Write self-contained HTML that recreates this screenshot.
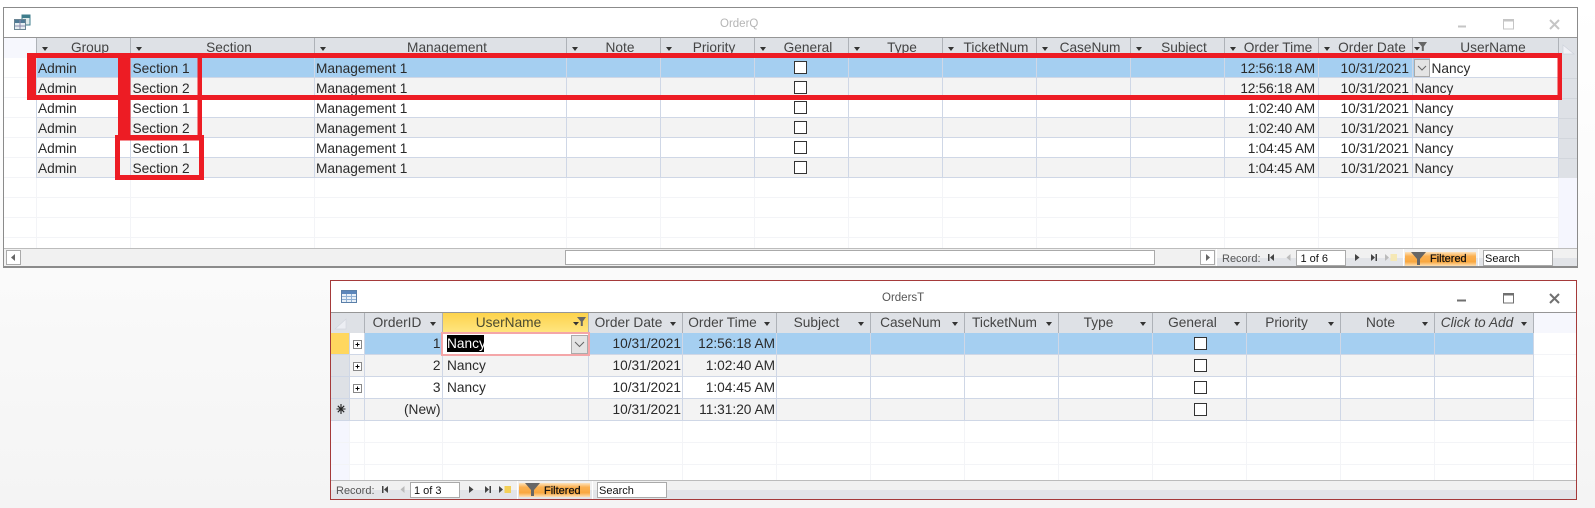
<!DOCTYPE html>
<html><head><meta charset="utf-8"><title>OrderQ / OrdersT</title>
<style>
html,body{margin:0;padding:0}
body{width:1595px;height:508px;position:relative;overflow:hidden;background:linear-gradient(180deg,#fff 0,#fafafa 270px,#f4f4f4 508px);font-family:"Liberation Sans",sans-serif;font-size:13.7px;color:#2a2a2a}
svg{position:absolute;left:0;top:0}
.t{position:absolute;white-space:nowrap}
.row{position:absolute;left:0;width:1595px}
.row .t{top:0;line-height:inherit}
.r{text-align:right}
.tm{letter-spacing:-.2px}
.h{position:absolute;height:20px;line-height:20px;text-align:center;color:#444;white-space:nowrap;box-sizing:border-box}
.h i{position:absolute;top:9px;width:0;height:0;border:3px solid transparent;border-top:4px solid #333;border-bottom:0}
.a .h{top:38px;padding-left:14px}
.a .h i{left:6px}
.b .h{top:313px;padding-right:13px}
.b .h i{right:6px}
.s{font-size:11px;line-height:14px;color:#111}
</style></head><body>
<svg width="1595" height="508" xmlns="http://www.w3.org/2000/svg" shape-rendering="crispEdges">
<!-- TOP WINDOW -->
<rect x="3.5" y="7.5" width="1574" height="260" fill="#fff" stroke="#8b8b8b" stroke-width="1.3"/>
<rect x="4" y="38" width="32" height="20" fill="#f6f7fd"/>
<rect x="36" y="38" width="1376" height="20" fill="#dee1e6"/>
<rect x="1412" y="38" width="147" height="20" fill="#dee1e6"/>
<rect x="1559" y="38" width="18" height="140" fill="#dee1e6"/>
<rect x="1559" y="178" width="18" height="70" fill="#f5f6fe"/>
<path d="M4 37.5H1577" stroke="#969696"/>
<rect x="36" y="58" width="1523" height="20" fill="#a5cff1"/>
<rect x="1430" y="58" width="129" height="20" fill="#fff"/>
<rect x="36" y="78" width="1523" height="20" fill="#f3f3f3"/>
<rect x="36" y="118" width="1523" height="20" fill="#f3f3f3"/>
<rect x="36" y="158" width="1523" height="20" fill="#f3f3f3"/>
<!-- faint grid -->
<path d="M4 77.5H36M4 97.5H36M4 117.5H36M4 137.5H36M4 157.5H36M4 177.5H36M4 197.5H1559M4 217.5H1559M4 237.5H1559M36.5 178V248M130.5 178V248M314.5 178V248M566.5 178V248M660.5 178V248M754.5 178V248M848.5 178V248M942.5 178V248M1036.5 178V248M1130.5 178V248M1224.5 178V248M1318.5 178V248M1412.5 178V248M1558.5 178V248" stroke="#f3f4f7" fill="none"/>
<path d="M36 77.5H1559M36 97.5H1559M36 117.5H1559M36 137.5H1559M36 157.5H1559M36 177.5H1559M36.5 58V178M130.5 58V178M314.5 58V178M566.5 58V178M660.5 58V178M754.5 58V178M848.5 58V178M942.5 58V178M1036.5 58V178M1130.5 58V178M1224.5 58V178M1318.5 58V178M1412.5 58V178M1558.5 58V178" stroke="#cfd7e6" fill="none"/>
<path d="M36.5 38V58M130.5 38V58M314.5 38V58M566.5 38V58M660.5 38V58M754.5 38V58M848.5 38V58M942.5 38V58M1036.5 38V58M1130.5 38V58M1224.5 38V58M1318.5 38V58M1412.5 38V58M1558.5 38V58" stroke="#aeb2b8" fill="none"/>
<path d="M1559 98.5H1577M1559 118.5H1577M1559 138.5H1577M1559 158.5H1577M1559 78.5H1577" stroke="#d2d6dc"/>
<path d="M1563 45L1574 54H1563Z" fill="#f0f1f6" shape-rendering="auto" stroke="#cfd3dc" stroke-width=".7"/>
<!-- top window checkboxes -->
<g fill="#fff" stroke="#333" stroke-width="1.2">
<rect x="794.5" y="61.5" width="12" height="12"/><rect x="794.5" y="81.5" width="12" height="12"/><rect x="794.5" y="101.5" width="12" height="12"/><rect x="794.5" y="121.5" width="12" height="12"/><rect x="794.5" y="141.5" width="12" height="12"/><rect x="794.5" y="161.5" width="12" height="12"/>
</g>
<!-- top dropdown -->
<rect x="1414.5" y="59.5" width="15" height="17" fill="#e4e4e4" stroke="#ababab"/>
<path d="M1418 66L1422 70L1426 66" fill="none" stroke="#666" shape-rendering="auto"/>
<!-- top header filter -->
<path d="M1418 42H1427L1423.800 46.500V51H1421.800V46.500Z" fill="#666" shape-rendering="auto"/><path d="M1414 47H1420L1417 50.500Z" fill="#333" shape-rendering="auto"/>
<!-- top title icon -->
<rect x="22" y="15" width="8" height="10" fill="#dfeaea" stroke="#3f7d8c"/><rect x="22" y="15" width="8" height="3" fill="#3f7d8c"/>
<rect x="14.5" y="19.5" width="11" height="10" fill="#e6eef2" stroke="#6b8594"/><rect x="15" y="20" width="10" height="3" fill="#4f7a95"/><path d="M20 20V29M15 26H25" stroke="#88a"/>
<!-- top window buttons -->
<path d="M1458 26.5H1466" stroke="#c5c5c5" stroke-width="2"/>
<rect x="1503.5" y="19.5" width="10" height="9.5" fill="none" stroke="#c5c5c5"/><path d="M1503 20.5H1514" stroke="#c5c5c5" stroke-width="2"/>
<path d="M1550 20L1559 29M1559 20L1550 29" stroke="#c5c5c5" stroke-width="2" shape-rendering="auto"/>
<!-- top scrollbar / nav -->
<rect x="4" y="249" width="1213" height="18" fill="#f1f1f1"/>
<rect x="1217" y="249" width="360" height="9" fill="#f1f1f1"/><rect x="1217" y="258" width="360" height="9" fill="#e2e4e8"/>
<path d="M4 248.5H1577" stroke="#bcbcbc"/>
<path d="M1216.5 249V267M1403.5 249V267M1478.5 249V267" stroke="#fff"/>
<path d="M4 266.5H1577" stroke="#8b8b8b"/>
<rect x="6.5" y="250.5" width="14" height="14" fill="#fff" stroke="#aaa"/><path d="M11 257.5L15 254V261Z" fill="#666" shape-rendering="auto"/>
<rect x="565.5" y="250.5" width="589" height="14" fill="#fff" stroke="#aaa"/>
<rect x="1200.5" y="250.5" width="14" height="14" fill="#fff" stroke="#aaa"/><path d="M1206 254V261L1210 257.5Z" fill="#666" shape-rendering="auto"/>
<g shape-rendering="auto">
<path d="M1268 254H1269.5V261H1268ZM1274 254V261L1270 257.5Z" fill="#444"/>
<path d="M1290.5 254V261L1286.5 257.5Z" fill="#bbb"/>
<path d="M1355 254V261L1359.5 257.5Z" fill="#444"/>
<path d="M1371 254V261L1375 257.5ZM1375.5 254H1377V261H1375.5Z" fill="#444"/>
<path d="M1385 254V261L1389 257.5Z" fill="#bbb"/>
<rect x="1390.5" y="254" width="6.5" height="7" fill="#f5e8b5"/>
</g>
<rect x="1296.5" y="250.5" width="49" height="15" fill="#fff" stroke="#aaa"/>
<defs><linearGradient id="o" x1="0" y1="0" x2="0" y2="1"><stop offset="0" stop-color="#fde3bd"/><stop offset=".3" stop-color="#fbb152"/><stop offset=".7" stop-color="#f9a840"/><stop offset="1" stop-color="#fde0b5"/></linearGradient>
<linearGradient id="y" x1="0" y1="0" x2="0" y2="1"><stop offset="0" stop-color="#fdd34c"/><stop offset="1" stop-color="#ffe682"/></linearGradient></defs>
<rect x="1405" y="252" width="71" height="14" fill="url(#o)"/>
<path d="M1411 252H1426L1420 259V265H1417V259Z" fill="#666" shape-rendering="auto"/>
<rect x="1483.5" y="250.5" width="69" height="15" fill="#fff" stroke="#aaa"/>

<!-- LOWER WINDOW -->
<rect x="330.5" y="280.5" width="1246" height="219" fill="#fff" stroke="#a53a3a" stroke-width="1.2"/>
<rect x="331" y="313" width="1202" height="20" fill="#dee1e6"/>
<rect x="1533" y="313" width="43" height="20" fill="#f6f7fd"/>
<rect x="442" y="313" width="146" height="20" fill="url(#y)"/>
<path d="M331 312.5H1576" stroke="#969696"/>
<rect x="331" y="333" width="18" height="21" fill="#ffd75f"/>
<rect x="331" y="355" width="18" height="65" fill="#dee1e6"/>
<rect x="331" y="421" width="18" height="59" fill="#f5f6fe"/>
<rect x="365" y="333" width="1168" height="21" fill="#a5cff1"/>
<rect x="349" y="355" width="1184" height="21" fill="#f3f3f3"/>
<rect x="349" y="399" width="1184" height="21" fill="#f3f3f3"/>
<path d="M331 442.5H1576M331 464.5H1576M1533 354.5H1576M1533 376.5H1576M1533 398.5H1576M1533 420.5H1576M349.5 421V480M364.5 421V480M442.5 421V480M588.5 421V480M682.5 421V480M776.5 421V480M870.5 421V480M964.5 421V480M1058.5 421V480M1152.5 421V480M1246.5 421V480M1340.5 421V480M1434.5 421V480M1533.5 421V480" stroke="#f3f4f7" fill="none"/>
<path d="M331 354.5H1533M331 376.5H1533M331 398.5H1533M331 420.5H1533M349.5 333V421M364.5 333V421M442.5 333V421M588.5 333V421M682.5 333V421M776.5 333V421M870.5 333V421M964.5 333V421M1058.5 333V421M1152.5 333V421M1246.5 333V421M1340.5 333V421M1434.5 333V421M1533.5 333V421" stroke="#cfd7e6" fill="none"/>
<path d="M364.5 313V333M442.5 313V333M588.5 313V333M682.5 313V333M776.5 313V333M870.5 313V333M964.5 313V333M1058.5 313V333M1152.5 313V333M1246.5 313V333M1340.5 313V333M1434.5 313V333M1533.5 313V333" stroke="#aeb2b8" fill="none"/>
<path d="M346 319L335 329H346Z" fill="#eceef3" stroke="#d3d6de" stroke-width=".7" shape-rendering="auto"/>
<!-- edit cell -->
<rect x="442" y="333" width="147" height="22" fill="#fff" stroke="#f4a6a8" stroke-width="2"/>
<rect x="447" y="335" width="37" height="17" fill="#000"/>
<rect x="571.5" y="335.5" width="16" height="18" fill="#e4e4e4" stroke="#ababab"/>
<path d="M575 342L579.5 346.5L584 342" fill="none" stroke="#666" shape-rendering="auto"/>
<!-- expand boxes -->
<g fill="#fff" stroke="#888"><rect x="353.5" y="340.5" width="8" height="8"/><rect x="353.5" y="362.5" width="8" height="8"/><rect x="353.5" y="384.5" width="8" height="8"/></g>
<path d="M355.5 344.5H359.5M357.5 342.5V346.5M355.5 366.5H359.5M357.5 364.5V368.5M355.5 388.5H359.5M357.5 386.5V390.5" stroke="#000"/>
<!-- star -->
<path d="M341 404V414M336.5 409H345.5M337.8 405.8L344.2 412.2M344.2 405.8L337.8 412.2" stroke="#222" stroke-width="1.1" shape-rendering="auto"/>
<!-- checkboxes -->
<g fill="#fff" stroke="#333" stroke-width="1.2"><rect x="1194.5" y="337.5" width="12" height="12"/><rect x="1194.5" y="359.5" width="12" height="12"/><rect x="1194.5" y="381.5" width="12" height="12"/><rect x="1194.5" y="403.5" width="12" height="12"/></g>
<!-- header filter -->
<path d="M577 317H586L582.8 321.5V326H580.8V321.5Z" fill="#666" shape-rendering="auto"/><path d="M573 322H579L576 325.5Z" fill="#333" shape-rendering="auto"/>
<!-- title icon -->
<rect x="341.5" y="290.5" width="15" height="12" fill="#e8f0f8" stroke="#5a7fa8"/><rect x="342" y="291" width="14" height="3" fill="#5b86bb"/>
<path d="M346.5 294V302M351.5 294V302M342 296.5H356M342 299.5H356" stroke="#8fb0d4"/>
<!-- buttons -->
<path d="M1457 300.5H1466" stroke="#707070" stroke-width="2"/>
<rect x="1503.5" y="293.5" width="10" height="9.5" fill="none" stroke="#707070"/><path d="M1503 294.5H1514" stroke="#707070" stroke-width="2"/>
<path d="M1550 294L1559 303M1559 294L1550 303" stroke="#707070" stroke-width="2" shape-rendering="auto"/>
<!-- nav -->
<rect x="331" y="481" width="1245" height="9" fill="#f1f1f1"/><rect x="331" y="490" width="1245" height="9" fill="#e2e4e8"/>
<path d="M331 480.5H1576" stroke="#bcbcbc"/>
<path d="M517.5 481V499M592.5 481V499" stroke="#fff"/>
<g shape-rendering="auto" transform="translate(-886 232)">
<path d="M1268 254H1269.5V261H1268ZM1274 254V261L1270 257.5Z" fill="#444"/>
<path d="M1290.5 254V261L1286.5 257.5Z" fill="#bbb"/>
<path d="M1355 254V261L1359.5 257.5Z" fill="#444"/>
<path d="M1371 254V261L1375 257.5ZM1375.5 254H1377V261H1375.5Z" fill="#444"/>
<path d="M1385 254V261L1389 257.5Z" fill="#444"/>
<rect x="1390.5" y="254" width="6.5" height="7" fill="#f3cf57"/>
</g>
<rect x="410.5" y="482.5" width="49" height="15" fill="#fff" stroke="#aaa"/>
<rect x="519" y="483" width="71" height="14" fill="url(#o)"/>
<path d="M525 483H540L534 490V496H531V490Z" fill="#666" shape-rendering="auto"/>
<rect x="597.5" y="482.5" width="69" height="15" fill="#fff" stroke="#aaa"/>
</svg>

<!-- TOP TEXT -->
<div class="t" style="left:720px;top:17px;font-size:11.5px;line-height:14px;color:#b5b5b5">OrderQ</div>
<div class="a">
<div class="h" style="left:36px;width:94px"><i></i>Group</div>
<div class="h" style="left:130px;width:184px"><i></i>Section</div>
<div class="h" style="left:314px;width:252px"><i></i>Management</div>
<div class="h" style="left:566px;width:94px"><i></i>Note</div>
<div class="h" style="left:660px;width:94px"><i></i>Priority</div>
<div class="h" style="left:754px;width:94px"><i></i>General</div>
<div class="h" style="left:848px;width:94px"><i></i>Type</div>
<div class="h" style="left:942px;width:94px"><i></i>TicketNum</div>
<div class="h" style="left:1036px;width:94px"><i></i>CaseNum</div>
<div class="h" style="left:1130px;width:94px"><i></i>Subject</div>
<div class="h" style="left:1224px;width:94px"><i></i>Order Time</div>
<div class="h" style="left:1318px;width:94px"><i></i>Order Date</div>
<div class="h" style="left:1412px;width:146px;padding-left:16px">UserName</div>
</div>
<div class="row" style="top:59px;line-height:20px"><span class="t" style="left:38px">Admin</span><span class="t" style="left:132.5px">Section 1</span><span class="t" style="left:316px">Management 1</span><span class="t r tm" style="left:1224px;width:91px">12:56:18 AM</span><span class="t r" style="left:1318px;width:91px">10/31/2021</span><span class="t" style="left:1431.5px">Nancy</span></div>
<div class="row" style="top:79px;line-height:20px"><span class="t" style="left:38px">Admin</span><span class="t" style="left:132.5px">Section 2</span><span class="t" style="left:316px">Management 1</span><span class="t r tm" style="left:1224px;width:91px">12:56:18 AM</span><span class="t r" style="left:1318px;width:91px">10/31/2021</span><span class="t" style="left:1414.5px">Nancy</span></div>
<div class="row" style="top:99px;line-height:20px"><span class="t" style="left:38px">Admin</span><span class="t" style="left:132.5px">Section 1</span><span class="t" style="left:316px">Management 1</span><span class="t r tm" style="left:1224px;width:91px">1:02:40 AM</span><span class="t r" style="left:1318px;width:91px">10/31/2021</span><span class="t" style="left:1414.5px">Nancy</span></div>
<div class="row" style="top:119px;line-height:20px"><span class="t" style="left:38px">Admin</span><span class="t" style="left:132.5px">Section 2</span><span class="t" style="left:316px">Management 1</span><span class="t r tm" style="left:1224px;width:91px">1:02:40 AM</span><span class="t r" style="left:1318px;width:91px">10/31/2021</span><span class="t" style="left:1414.5px">Nancy</span></div>
<div class="row" style="top:139px;line-height:20px"><span class="t" style="left:38px">Admin</span><span class="t" style="left:132.5px">Section 1</span><span class="t" style="left:316px">Management 1</span><span class="t r tm" style="left:1224px;width:91px">1:04:45 AM</span><span class="t r" style="left:1318px;width:91px">10/31/2021</span><span class="t" style="left:1414.5px">Nancy</span></div>
<div class="row" style="top:159px;line-height:20px"><span class="t" style="left:38px">Admin</span><span class="t" style="left:132.5px">Section 2</span><span class="t" style="left:316px">Management 1</span><span class="t r tm" style="left:1224px;width:91px">1:04:45 AM</span><span class="t r" style="left:1318px;width:91px">10/31/2021</span><span class="t" style="left:1414.5px">Nancy</span></div>
<div class="t s" style="left:1222px;top:252px;color:#555">Record:</div>
<div class="t s" style="left:1300.5px;top:252px">1 of 6</div>
<div class="t s" style="left:1430px;top:251.5px;-webkit-text-stroke:.25px #111">Filtered</div>
<div class="t s" style="left:1485px;top:252px">Search</div>

<!-- LOWER TEXT -->
<div class="t" style="left:882px;top:291px;font-size:11.5px;line-height:14px;color:#555">OrdersT</div>
<div class="b">
<div class="h" style="left:365px;width:77px"><i></i>OrderID</div>
<div class="h" style="left:442px;width:146px;color:#4a4a30">UserName</div>
<div class="h" style="left:588px;width:94px"><i></i>Order Date</div>
<div class="h" style="left:682px;width:94px"><i></i>Order Time</div>
<div class="h" style="left:776px;width:94px"><i></i>Subject</div>
<div class="h" style="left:870px;width:94px"><i></i>CaseNum</div>
<div class="h" style="left:964px;width:94px"><i></i>TicketNum</div>
<div class="h" style="left:1058px;width:94px"><i></i>Type</div>
<div class="h" style="left:1152px;width:94px"><i></i>General</div>
<div class="h" style="left:1246px;width:94px"><i></i>Priority</div>
<div class="h" style="left:1340px;width:94px"><i></i>Note</div>
<div class="h" style="left:1434px;width:99px;font-style:italic"><i></i>Click to Add</div>
</div>
<div class="row" style="top:333px;line-height:21px"><span class="t r" style="left:365px;width:75.5px">1</span><span class="t" style="left:447px;color:#fff">Nancy</span><span class="t r" style="left:588px;width:93px">10/31/2021</span><span class="t r" style="left:682px;width:93px">12:56:18 AM</span></div>
<div class="row" style="top:355px;line-height:21px"><span class="t r" style="left:365px;width:75.5px">2</span><span class="t" style="left:447px">Nancy</span><span class="t r" style="left:588px;width:93px">10/31/2021</span><span class="t r" style="left:682px;width:93px">1:02:40 AM</span></div>
<div class="row" style="top:377px;line-height:21px"><span class="t r" style="left:365px;width:75.5px">3</span><span class="t" style="left:447px">Nancy</span><span class="t r" style="left:588px;width:93px">10/31/2021</span><span class="t r" style="left:682px;width:93px">1:04:45 AM</span></div>
<div class="row" style="top:399px;line-height:21px"><span class="t r" style="left:365px;width:75.5px">(New)</span><span class="t r" style="left:588px;width:93px">10/31/2021</span><span class="t r" style="left:682px;width:93px">11:31:20 AM</span></div>
<div class="t s" style="left:336px;top:484px;color:#555">Record:</div>
<div class="t s" style="left:414px;top:484px">1 of 3</div>
<div class="t s" style="left:544px;top:484px;-webkit-text-stroke:.25px #111">Filtered</div>
<div class="t s" style="left:599px;top:484px">Search</div>

<!-- RED ANNOTATIONS -->
<svg width="1595" height="508" xmlns="http://www.w3.org/2000/svg" shape-rendering="crispEdges" fill="#ed1c24">
<rect x="27" y="53" width="1535" height="5"/>
<rect x="27" y="95" width="1535" height="5"/>
<rect x="27" y="53" width="9" height="47"/>
<rect x="1557.5" y="53" width="4.5" height="47"/>
<rect x="118" y="53" width="12.5" height="87"/>
<rect x="197.5" y="53" width="4.5" height="87"/>
<rect x="115" y="135" width="89" height="5.5"/>
<rect x="115" y="135" width="5" height="45"/>
<rect x="199" y="135" width="5" height="45"/>
<rect x="115" y="175" width="89" height="5"/>
</svg>
</body></html>
